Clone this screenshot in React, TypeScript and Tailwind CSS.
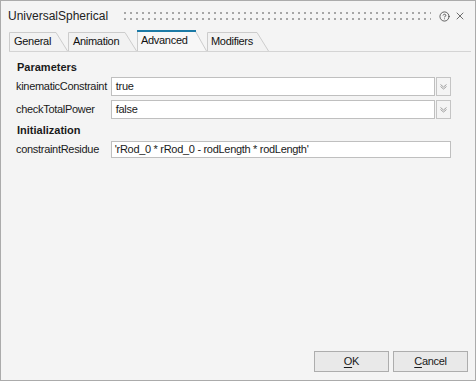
import { CircleHelp, X } from "lucide-react";

const font = "font-['Liberation_Sans',Arial,sans-serif]";

type TabProps = { label: string; width: number; active?: boolean; textPad: number };

function Tab({ label, width, active, textPad }: TabProps) {
    const h = active ? 21 : 19;
    return (
        <div className="relative flex items-center" style={{ width, height: h }}>
            <svg className="absolute inset-0" width={width} height={h}>
                <path
                    d={`M0.5 ${h} L0.5 0.5 L${width - 12} 0.5 L${width - 0.5} ${h}`}
                    fill={active ? "#f7f7f7" : "#f2f2f2"}
                    stroke="#cccccc"
                />
                {active && <rect x={0} y={0} width={width - 11} height={2} fill="#1b7aa6" />}
            </svg>
            <span className="relative text-[11px] tracking-[-0.3px] text-[#111]" style={{ paddingLeft: textPad }}>
                {label}
            </span>
        </div>
    );
}

function Chevron() {
    return (
        <svg width="7" height="6" viewBox="0 0 7 6">
            <path d="M0.5 0.5 L3.5 3 L6.5 0.5" fill="none" stroke="#a0a0a0" />
            <path d="M0.5 2.5 L3.5 5 L6.5 2.5" fill="none" stroke="#a0a0a0" />
        </svg>
    );
}

function ComboRow({ label, value }: { label: string; value: string }) {
    return (
        <div className="flex items-center h-[19px]">
            <span className="w-[95px] text-[11px] tracking-[-0.3px]">{label}</span>
            <div className="w-[325px] h-[19px] bg-white border border-[#bfbfbf] flex items-center pl-[4px] text-[11px] tracking-[-0.3px]">
                {value}
            </div>
            <div className="ml-[1px] w-[15px] h-[19px] border border-[#c4c4c4] flex items-center justify-center">
                <Chevron />
            </div>
        </div>
    );
}

export default function App() {
    return (
        <div className={`${font} w-[476px] h-[381px] border border-[#ababab] bg-[#f4f4f4] text-[#1a1a1a] flex flex-col`}>
            {/* Title bar */}
            <div className="h-[30px] flex items-center pl-[7px] pr-[9px]">
                <span className="text-[12px] text-[#222]">UniversalSpherical</span>
                <svg className="flex-1 h-[8px] ml-[16px] mr-[8px]">
                    <defs>
                        <pattern id="grip" width="6" height="6" patternUnits="userSpaceOnUse">
                            <rect x="0" y="0" width="2" height="2" fill="#a6a6a6" />
                        </pattern>
                    </defs>
                    <rect x="0" y="0" width="100%" height="8" fill="url(#grip)" />
                </svg>
                <CircleHelp size={11} strokeWidth={1.8} className="text-[#444]" />
                <X size={12} strokeWidth={1.4} className="ml-[4px] text-[#333]" />
            </div>

            {/* Tabs */}
            <div className="h-[21px] ml-[8px] mr-[4px] border-b border-[#d4d4d4] flex items-end">
                <Tab label="General" width={59} textPad={5} />
                <Tab label="Animation" width={69} textPad={5} />
                <Tab label="Advanced" width={70} textPad={4} active />
                <Tab label="Modifiers" width={62} textPad={4} />
            </div>

            {/* Body */}
            <div className="flex-1 pl-[15px] pr-[24px] pt-[6px] flex flex-col">
                <div className="h-[18px] flex items-center pl-[1px] text-[11px] font-bold">Parameters</div>
                <div className="mt-[1px] flex flex-col gap-[4px]">
                    <ComboRow label="kinematicConstraint" value="true" />
                    <ComboRow label="checkTotalPower" value="false" />
                </div>
                <div className="h-[22px] flex items-center pl-[1px] text-[11px] font-bold">Initialization</div>
                <div className="flex items-center h-[17px]">
                    <span className="w-[95px] text-[11px] tracking-[-0.3px]">constraintResidue</span>
                    <div className="w-[341px] h-[17px] bg-white border border-[#bfbfbf] flex items-center pl-[3px] text-[11px] tracking-[-0.3px]">
                        'rRod_0 * rRod_0 - rodLength * rodLength'
                    </div>
                </div>
            </div>

            {/* Footer */}
            <div className="flex justify-end gap-[4px] pr-[7px] pb-[8px]">
                <button className="w-[75px] h-[21px] bg-[#e9e9e9] border border-[#adadad] text-[11px] tracking-[-0.3px]">
                    <span className="underline underline-offset-[2px]">O</span>K
                </button>
                <button className="w-[75px] h-[21px] bg-[#e9e9e9] border border-[#adadad] text-[11px] tracking-[-0.3px]">
                    <span className="underline underline-offset-[2px]">C</span>ancel
                </button>
            </div>
        </div>
    );
}
